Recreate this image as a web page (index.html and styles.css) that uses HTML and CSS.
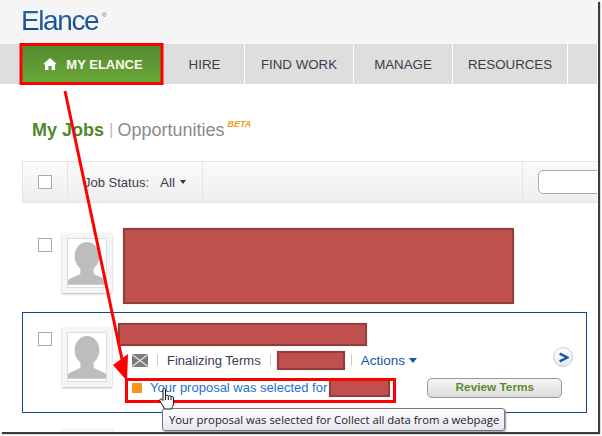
FILE: index.html
```html
<!DOCTYPE html>
<html lang="en">
<head>
<meta charset="utf-8">
<title>Elance - My Jobs</title>
<link rel="stylesheet" href="styles.css">
</head>
<body>
<div class="shot">
  <div class="window">
    <header class="masthead">
      <div class="logo">Elance<sup class="reg">®</sup></div>
    </header>
    <nav class="nav">
      <a class="tab tab-active">
        <svg class="home" viewBox="0 0 14 12" width="14" height="12"><path d="M7 0 L14 6.2 L12 6.2 L12 12 L8.6 12 L8.6 8 L5.4 8 L5.4 12 L2 12 L2 6.2 L0 6.2 Z" fill="#fff"/></svg>
        MY ELANCE
      </a>
      <a class="tab tab-hire">HIRE</a>
      <a class="tab tab-find">FIND WORK</a>
      <a class="tab tab-manage">MANAGE</a>
      <a class="tab tab-res">RESOURCES</a>
    </nav>
    <div class="title">
      <span class="t-main">My Jobs</span>
      <span class="t-sep">|</span>
      <span class="t-opp">Opportunities</span>
      <sup class="t-beta">BETA</sup>
    </div>
    <div class="toolbar">
      <div class="cell cell-check"><span class="check"></span></div>
      <div class="cell cell-status"><span>Job Status:</span><span class="all">All</span><span class="caret"></span></div>
      <div class="cell cell-fill"></div>
      <div class="cell cell-search"><span class="search"></span></div>
    </div>
    <section class="job job-plain">
      <span class="check check-row"></span>
      <div class="avatar">
        <div class="avatar-in">
          <svg viewBox="0 0 40 50" width="38" height="48"><path d="M20 3 C27 3 33 9 33 18 C33 24 30 28 27 31 L27 36 C30 39 37 40 40 43 L40 48 L0 48 L0 43 C3 40 10 39 13 36 L13 31 C10 28 7 24 7 18 C7 9 13 3 20 3 Z" fill="#bdbdbd"/></svg>
        </div>
      </div>
      <div class="redact redact-big"></div>
    </section>
    <section class="job job-active">
      <span class="check check-row"></span>
      <div class="avatar">
        <div class="avatar-in">
          <svg viewBox="0 0 40 50" width="38" height="48"><path d="M20 3 C27 3 33 9 33 18 C33 24 30 28 27 31 L27 36 C30 39 37 40 40 43 L40 48 L0 48 L0 43 C3 40 10 39 13 36 L13 31 C10 28 7 24 7 18 C7 9 13 3 20 3 Z" fill="#bdbdbd"/></svg>
        </div>
      </div>
      <div class="job-body">
        <div class="redact redact-title"></div>
        <div class="meta">
          <svg class="mail" viewBox="0 0 16 13" width="16" height="13"><rect width="16" height="13" rx="1" fill="#7a7a7a"/><path d="M0.5 0.8 L15.5 12.2 M15.5 0.8 L0.5 12.2" stroke="#e8e8e8" stroke-width="1.1"/></svg>
          <span class="bar bar-a"></span>
          <span class="status">Finalizing Terms</span>
          <span class="bar bar-b"></span>
          <div class="redact redact-meta"></div>
          <span class="bar bar-c"></span>
          <span class="actions">Actions<span class="caret caret-blue"></span></span>
          <span class="go"><svg viewBox="0 0 10 10" width="11" height="11"><path d="M1.5 1.5 L8.5 5 L1.5 8.5" fill="none" stroke="#1257a8" stroke-width="2.2"/></svg></span>
        </div>
        <div class="notice">
          <span class="square"></span>
          <a class="notice-link">Your proposal was selected for</a>
          <div class="redact redact-link"></div>
          <button class="review">Review Terms</button>
        </div>
      </div>
    </section>
    <section class="job job-plain job-next">
      <span class="check check-row"></span>
      <div class="avatar"></div>
    </section>

    <svg class="marks" viewBox="0 0 602 436" width="602" height="436">
      <rect x="21" y="44.5" width="141" height="39" fill="none" stroke="#f00" stroke-width="3"/>
      <rect x="126.5" y="379.5" width="268" height="22" fill="none" stroke="#f00" stroke-width="3"/>
      <path d="M65 91 L123 364" fill="none" stroke="#f00" stroke-width="3"/>
      <path d="M127 381 L113 365 L128 354 Z" fill="#f00"/>
    </svg>
    <div class="tooltip">Your proposal was selected for Collect all data from a webpage</div>
    <svg class="cursor" viewBox="0 0 17 22" width="17" height="22">
      <path d="M4 1.5 C4 0.3 6.5 0.3 6.5 1.5 L6.5 8 C7 7 9 7 9.3 8.3 C9.8 7.3 11.7 7.5 12 8.8 C12.6 8 14.5 8.4 14.5 10 L14.5 15 C14.5 18 13 19 12.5 21 L5.5 21 C5 19 1 14 0.8 12.5 C0.6 10.5 2.7 10.5 4 12.5 Z" fill="#fff" stroke="#111" stroke-width="1"/>
      <path d="M6.5 8 L6.5 12 M9.3 8.3 L9.3 12 M12 8.8 L12 12" stroke="#111" stroke-width="1" fill="none"/>
    </svg>
  </div>
</div>
</body>
</html>
```

FILE: styles.css
```css
* { box-sizing: border-box; }
html, body { margin: 0; padding: 0; background: #fff; }
body { width: 602px; height: 436px; overflow: hidden; font-family: "Liberation Sans", Arial, sans-serif; color: #333; }
.shot { width: 602px; height: 436px; overflow: hidden; }
.window { position: relative; width: 598px; height: 432px; background: #fff; overflow: hidden; box-shadow: 2px 2px 1px #3c3c3c; }

.masthead { height: 44px; background: #f5f5f5; padding: 4px 0 0 21px; }
.logo { font-size: 28px; line-height: 34px; letter-spacing: -1.4px; color: #12569b; background: linear-gradient(#2a70b5, #0a3f7e); -webkit-background-clip: text; background-clip: text; -webkit-text-fill-color: transparent; width: 90px; }
.reg { font-size: 6px; letter-spacing: 0; vertical-align: 13px; line-height: 0; margin-left: 4px; }

.nav { display: flex; height: 40px; width: 597px; background: #dedede; padding-left: 22px; }
.tab { display: flex; align-items: center; height: 40px; font-size: 13.3px; color: #3c3c4c; border-right: 1px solid #fff; justify-content: center; }
.tab-active { width: 140px; border-right: 0; color: #fbfbf0; font-weight: bold; font-size: 13px; background: linear-gradient(#548830, #6aa938); gap: 9px; padding-left: 2px; }
.tab-hire { width: 83px; padding-left: 3px; }
.tab-find { width: 109px; }
.tab-manage { width: 99px; }
.tab-res { width: 115px; }

.title { height: 77px; padding: 35px 0 0 32px; font-size: 18px; line-height: 22px; display: flex; align-items: flex-start; }
.t-main { color: #4f8a2c; font-weight: bold; }
.t-sep { color: #bbb; margin: 0 4px 0 5px; font-size: 17px; }
.t-opp { color: #8a8a8a; font-size: 18px; }
.t-beta { color: #ee9b2a; font-size: 9px; font-weight: bold; font-style: italic; line-height: 10px; margin: 0 0 0 3px; }

.toolbar { display: flex; height: 42px; margin-left: 22px; width: 575px; border: 1px solid #e4e4e4; border-right: 0; background: linear-gradient(#fbfbfb, #eeeeee); }
.cell { display: flex; align-items: center; border-right: 1px solid #e4e4e4; font-size: 13px; color: #3c3c4c; flex: none; }
.cell-check { width: 45px; justify-content: center; }
.cell-status { width: 135px; padding-left: 16px; }
.cell-fill { width: 320px; }
.cell-search { flex: 1 1 0; min-width: 0; overflow: hidden; border-right: 0; padding-left: 15px; }
.all { margin-left: 11px; font-size: 13.5px; }
.caret { display: inline-block; width: 0; height: 0; border: 3.5px solid transparent; border-top: 4px solid #333; border-bottom: 0; margin-left: 5px; }
.search { display: block; flex: none; width: 70px; height: 24px; background: #fff; border: 1px solid #a8a8a8; border-radius: 5px; }
.check { display: block; width: 14px; height: 14px; background: #fff; border: 1px solid #aaa; }

.job { display: flex; align-items: flex-start; margin-left: 22px; width: 565px; padding-left: 15px; }
.job-plain { height: 94px; margin-top: 15px; padding-top: 9px; border: 1px solid transparent; }
.job-active { height: 101px; padding-top: 9px; border: 1px solid #0a4a8f; }
.job-next { margin-top: 1px; }
.check-row { margin-top: 10px; flex: none; }
.avatar { flex: none; width: 50px; height: 60px; margin: 5px 0 0 10px; background: #f5f5f5; padding: 5px; box-shadow: 0 1px 2px #bbb; }
.avatar-in { width: 40px; height: 50px; border: 1px solid #dcdcdc; background: #fff; overflow: hidden; }
.avatar-in svg { display: block; }

.redact { background: #c0504d; border: 2px solid #8f3e3c; box-shadow: 0 0 1px #c99; flex: none; }
.redact-big { width: 391px; height: 76px; margin: 0 0 0 11px; }
.job-body { flex: 1; margin: 1px 0 0 6px; min-width: 0; }
.redact-title { width: 249px; height: 23px; }
.meta { display: flex; align-items: center; height: 20px; margin-top: 4px; font-size: 13.5px; padding-left: 14px; padding-right: 13px; color: #3c3c4c; }
.mail { flex: none; }
.bar { width: 1px; height: 12px; background: #ccc; flex: none; }
.bar-a { margin: 0 9px; }
.status { font-size: 13px; }
.bar-b { margin: 0 6px 0 9px; }
.redact-meta { width: 68px; height: 19px; }
.bar-c { margin: 0 9px 0 6px; }
.actions { color: #1257a8; font-size: 13.5px; display: flex; align-items: center; }
.caret-blue { border-top-color: #1257a8; border-width: 4px; border-top-width: 5px; border-bottom: 0; margin-left: 4px; }
.go { display: flex; align-items: center; justify-content: center; margin-left: auto; width: 20px; height: 20px; border-radius: 50%; border: 1px solid #ccc; background: linear-gradient(#fff, #e4e8ee); margin-top: -6px; }
.notice { display: flex; align-items: center; height: 21px; margin-top: 7px; padding-left: 14px; font-size: 13px; }
.square { width: 10px; height: 10px; background: #f7971e; flex: none; margin-right: 8px; }
.notice-link { color: #1a6fd0; white-space: nowrap; }
.redact-link { width: 61px; height: 19px; margin-left: 2px; }
.review { margin-left: 37px; width: 135px; height: 20px; padding: 0 0 2px; font: bold 11.8px "Liberation Sans", Arial, sans-serif; color: #5f8a2b; border: 1px solid #999; border-radius: 5px; background: linear-gradient(#f6f6f6, #dcdcdc); }

.marks { position: absolute; left: 0; top: 0; pointer-events: none; }
.tooltip { position: absolute; left: 162px; top: 408px; width: 343px; height: 23px; padding: 4px 0 0 6px; white-space: nowrap; font: 11.3px/14px "Open Sans", sans-serif; color: #222; background: linear-gradient(#fff, #e6e6f0); border: 1px solid #777; border-radius: 3px; box-shadow: 1px 1px 2px #999; }
.cursor { position: absolute; left: 159px; top: 388px; }
```
